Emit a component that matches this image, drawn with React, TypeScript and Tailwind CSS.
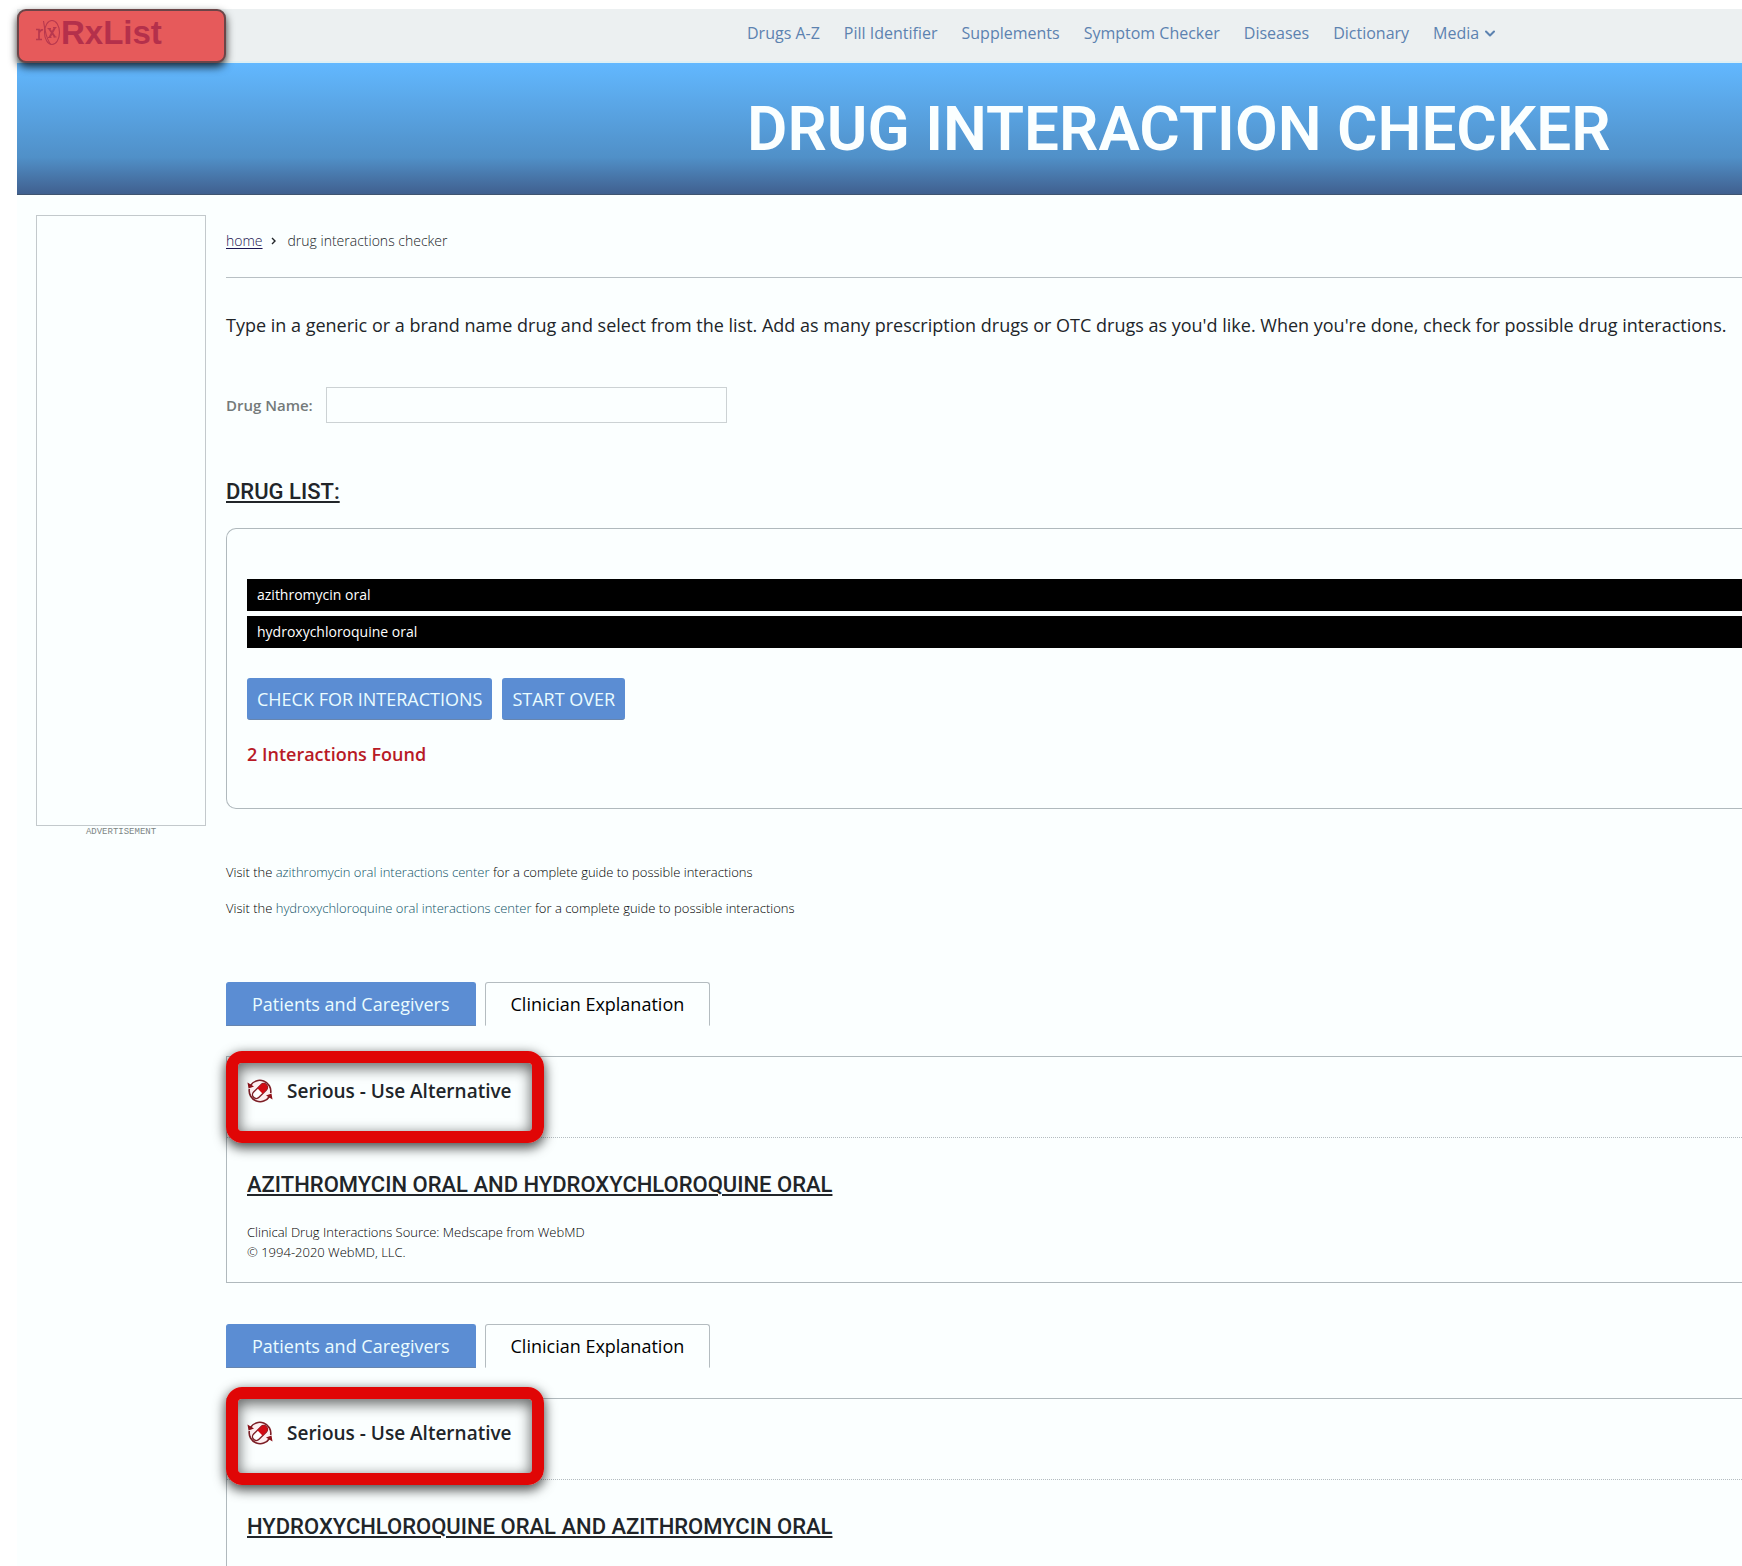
import React, { useState } from "react";

const NAV = ["Drugs A-Z", "Pill Identifier", "Supplements", "Symptom Checker", "Diseases", "Dictionary"];
const DRUGS = ["azithromycin oral", "hydroxychloroquine oral"];

function RxMark() {
  return (
    <svg width="26" height="28" viewBox="0 0 26 28" fill="none" aria-hidden="true" className="shrink-0">
      <ellipse cx="17" cy="13.500" rx="7.500" ry="12" stroke="#b8384e" strokeWidth="1.100" />
      <path d="M8.500 2c1 8 2 16 7 23.500" stroke="#b8384e" strokeWidth="1.100" />
      <path
        d="M1 10.500h3v10M1 20.500h6M4 14c1-2.500 2.500-3.500 4-3"
        stroke="#b8384e"
        strokeWidth="1.700"
      />
      <path d="M14 9.500l6 8.500M20 8.500l-5.500 10" stroke="#b8384e" strokeWidth="2" />
      <path d="M12.500 9.500h3.500M18 8.500h3.500M13 18.500h3.500M18.500 18h3" stroke="#b8384e" strokeWidth="1.200" />
    </svg>
  );
}

function PillSwapIcon() {
  return (
    <svg width="26" height="26" viewBox="0 0 26 26" fill="none" aria-hidden="true" className="shrink-0">
      <circle cx="13" cy="13" r="11.500" fill="#fdeef0" />
      <path d="M3.500 7.500A11 11 0 0 1 23.700 15" stroke="#7c1f26" strokeWidth="1.600" />
      <path d="M22.500 18.500A11 11 0 0 1 2.300 11" stroke="#7c1f26" strokeWidth="1.600" />
      <path d="M0.500 4.500l1 6 5.500-2z" fill="#8f1219" />
      <path d="M25.500 21.500l-1-6-5.500 2z" fill="#8f1219" />
      <g transform="rotate(45 13 13)">
        <rect x="9.200" y="4" width="7.600" height="18" rx="3.800" fill="#fff" stroke="#7c1f26" strokeWidth="1.400" />
        <path d="M9.200 13V7.800a3.800 3.800 0 0 1 7.600 0V13z" fill="#d20a14" />
      </g>
    </svg>
  );
}

function Tabs() {
  const [active, setActive] = useState(0);
  const base = "h-11 rounded-t-[3px] border px-[25px] text-lg";
  const on = "border-[#5b8dd3] border-b-[#6785ae] bg-[#5b8dd3] text-[#eafcff]";
  const off = "border-[#b4bcc0] border-b-transparent text-black";
  return (
    <div role="tablist" className="flex gap-[9px]">
      {["Patients and Caregivers", "Clinician Explanation"].map((label, i) => (
        <button
          key={label}
          role="tab"
          aria-selected={active === i}
          onClick={() => setActive(i)}
          className={`${base} ${active === i ? on : off}`}
        >
          {label}
        </button>
      ))}
    </div>
  );
}

function SeverityRow() {
  return (
    <div className="h-[81px] border-b border-dotted border-[#b4bcc0] pt-5 pl-5">
      <div className="flex h-7 items-center gap-3.5 text-[19px] font-semibold text-[#212529]">
        <PillSwapIcon />
        Serious - Use Alternative
      </div>
    </div>
  );
}

function Heading({ children }: { children: React.ReactNode }) {
  return (
    <h2 className="font-[Roboto,sans-serif] text-[22px] leading-7 font-medium text-[#212529] uppercase underline decoration-2 underline-offset-2">
      {children}
    </h2>
  );
}

const MARKER =
  "pointer-events-none absolute -left-px w-[318px] rounded-2xl border-[12px] border-[#e00606] shadow-[0_4px_12px_1px_rgba(0,0,0,0.7),inset_0_4px_14px_1px_rgba(0,0,0,0.6)]";

export default function App() {
  return (
    <div className="flex min-h-screen flex-col overflow-x-hidden bg-white pt-[9px] pl-[17px] font-['Open_Sans',sans-serif] text-[#212529]">
      <header className="flex h-[54px] items-start border-b-2 border-[#def0f4] bg-[#ecf0f1]">
        <a
          href="#"
          className="relative z-10 flex h-[54px] w-[209px] shrink-0 items-start rounded-[9px] border-2 border-[#6b4548] bg-[#e65a5b] pt-2 pl-4 shadow-[0_4px_9px_rgba(0,0,0,0.8)]"
        >
          <RxMark />
          <span className="font-['Liberation_Sans',sans-serif] text-[33px] leading-7 font-bold text-[#b4304b]">
            RxList
          </span>
        </a>
        <nav className="ml-[521px] flex h-12 items-center gap-6 text-base whitespace-nowrap text-[#5c82b0]">
          {NAV.map((item) => (
            <a key={item} href="#">
              {item}
            </a>
          ))}
          <button className="flex items-center gap-1.5">
            Media
            <svg width="10" height="7" viewBox="0 0 10 7" fill="none" aria-hidden="true">
              <path d="M1 1.500l4 4 4-4" stroke="currentColor" strokeWidth="2" strokeLinecap="round" strokeLinejoin="round" />
            </svg>
          </button>
        </nav>
      </header>

      <div className="flex h-[132px] items-center border-b border-[#3f5470] bg-linear-to-b from-[#62b8ff] via-[#5090c8] via-72% to-[#40608f] pl-[730px]">
        <h1 className="font-[Roboto,sans-serif] text-[62px] leading-none font-semibold whitespace-nowrap text-[#fbffff]">
          DRUG INTERACTION CHECKER
        </h1>
      </div>

      <div className="flex flex-1 gap-5 bg-[#fbffff] pl-[19px]">
        <aside className="w-[170px] shrink-0 pt-5">
          <div className="h-[611px] border border-[#c3c9cc]" />
          <div className="text-center font-['Liberation_Mono',monospace] text-[9px] leading-3 text-[#7c8584]">
            ADVERTISEMENT
          </div>
        </aside>

        <main className="flex min-w-0 flex-1 flex-col">
          <nav className="mt-[35px] flex h-[22px] items-center text-sm font-light">
            <a href="#" className="text-[#1c1450] underline underline-offset-2">
              home
            </a>
            <svg width="5" height="8" viewBox="0 0 5 8" fill="none" aria-hidden="true" className="mr-3 ml-2">
              <path d="M1 1l3 3-3 3" stroke="#212529" strokeWidth="1.400" />
            </svg>
            <span>drug interactions checker</span>
          </nav>
          <hr className="mt-[25px] border-[#b8c0c4]" />
          <p className="mt-[33px] text-lg leading-7">
            Type in a generic or a brand name drug and select from the list. Add as many prescription drugs or OTC drugs
            as you'd like. When you're done, check for possible drug interactions.
          </p>

          <div className="mt-12 flex items-center gap-[13px]">
            <label htmlFor="drug" className="text-[15px] font-semibold text-[#747a7a]">
              Drug Name:
            </label>
            <input id="drug" type="text" className="h-9 w-[401px] border border-[#ccd2d4] bg-transparent px-2" />
          </div>

          <div className="mt-[55px]">
            <Heading>Drug List:</Heading>
          </div>
          <section className="mt-[22px] rounded-l-[10px] border border-r-0 border-[#b0b9bd] pt-[50px] pb-10 pl-5">
            <ul className="flex flex-col gap-[5px]">
              {DRUGS.map((d) => (
                <li key={d} className="h-8 bg-black pl-2.5 text-sm leading-8 text-white">
                  {d}
                </li>
              ))}
            </ul>
            <div className="mt-[30px] flex gap-2.5 text-lg text-[#eafcff]">
              <button className="h-[42px] rounded-[3px] border-b border-[#6785ae] bg-[#5b8dd3] px-2.5">
                CHECK FOR INTERACTIONS
              </button>
              <button className="h-[42px] rounded-[3px] border-b border-[#6785ae] bg-[#5b8dd3] px-2.5">
                START OVER
              </button>
            </div>
            <p className="mt-5 text-lg leading-7 font-semibold text-[#b81a26]">2 Interactions Found</p>
          </section>

          <div className="mt-[53px] flex flex-col gap-4 text-[13px] leading-5 font-light text-black">
            {DRUGS.map((d) => (
              <p key={d}>
                Visit the{" "}
                <a href="#" className="text-[#0f5266]">
                  {d} interactions center
                </a>{" "}
                for a complete guide to possible interactions
              </p>
            ))}
          </div>

          <div className="mt-16">
            <Tabs />
          </div>
          <section className="relative mt-[30px] border border-r-0 border-[#b0b9bd] pb-5">
            <SeverityRow />
            <div className="mt-[33px] pl-5">
              <Heading>azithromycin oral and hydroxychloroquine oral</Heading>
              <p className="mt-[23px] text-[13px] leading-5 font-light text-black">
                Clinical Drug Interactions Source: Medscape from WebMD
                <br />© 1994-2020 WebMD, LLC.
              </p>
            </div>
            <div className={`${MARKER} -top-1.5 h-[92px]`} />
          </section>

          <div className="mt-[41px]">
            <Tabs />
          </div>
          <section className="relative mt-[30px] flex-1 border border-r-0 border-b-0 border-[#b0b9bd]">
            <SeverityRow />
            <div className="mt-[33px] pl-5">
              <Heading>hydroxychloroquine oral and azithromycin oral</Heading>
            </div>
            <div className={`${MARKER} -top-3 h-[98px]`} />
          </section>
        </main>
      </div>
    </div>
  );
}
